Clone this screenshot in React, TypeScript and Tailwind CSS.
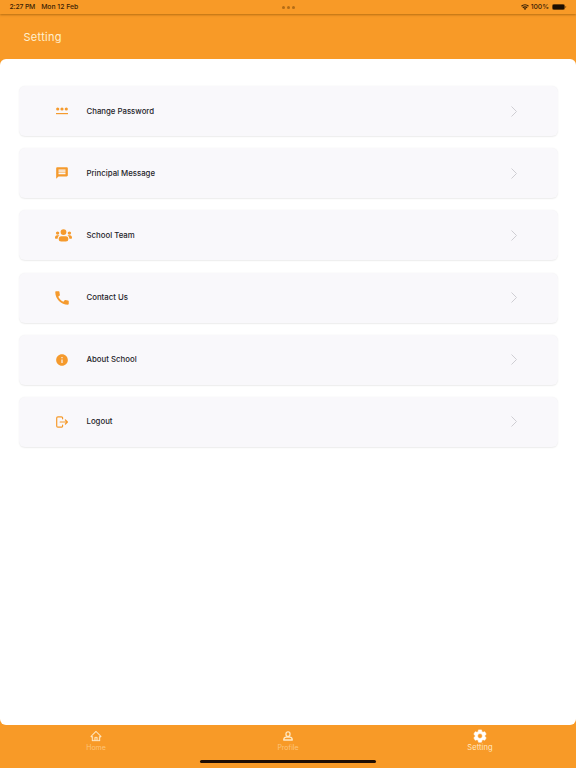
import React, { useState } from 'react';
import { MdMessage, MdCall, MdInfo } from 'react-icons/md';
import { AiOutlineHome } from 'react-icons/ai';

const PasswordIcon = () => (
  <svg viewBox="0 0 12 9" className="w-3 h-[9px] mt-px ml-[0.5px]" fill="currentColor">
    <circle cx="1.7" cy="2" r="1.6" />
    <circle cx="6" cy="2" r="1.6" />
    <circle cx="10.3" cy="2" r="1.6" />
    <rect y="6" width="12" height="1.2" />
  </svg>
);

const TeamIcon = () => (
  <svg viewBox="0 0 17 13" className="w-[17px] h-[13px]" fill="currentColor">
    <circle cx="8.5" cy="3.1" r="2.9" />
    <circle cx="2.6" cy="4.1" r="1.7" />
    <circle cx="14.4" cy="4.1" r="1.7" />
    <rect x="3.7" y="7.2" width="9.6" height="5.4" rx="2.5" />
    <path d="M4.5 6.5c-1.200.6-1.800 1.700-1.900 3.200H1C.4 9.700 0 9.300 0 8.700c0-1.500.8-2.400 2-2.400h1c.6 0 1.100.1 1.500.2ZM12.500 6.500c1.200.6 1.800 1.700 1.900 3.200H16c.6 0 1-.4 1-1 0-1.500-.8-2.400-2-2.400h-1c-.6 0-1.100.1-1.500.2Z" />
  </svg>
);

const LogoutIcon = () => (
  <svg viewBox="0 0 12 12" className="w-3 h-3 ml-[0.5px]" fill="none" stroke="currentColor" strokeWidth="1.2" strokeLinecap="round" strokeLinejoin="round">
    <path d="M6.600 2.800V2A1.200 1.200 0 0 0 5.400.8H1.900A1.200 1.200 0 0 0 .7 2v8a1.200 1.200 0 0 0 1.200 1.200h3.500A1.200 1.200 0 0 0 6.600 10v-.8" />
    <path d="M4.200 6h7.100M9.400 4 11.400 6l-2 2" />
  </svg>
);

const ProfileIcon = () => (
  <svg viewBox="0 0 10 10" className="w-[10px] h-[10px]" fill="none" stroke="currentColor" strokeWidth="1.3" strokeLinejoin="round">
    <rect x="3" y=".8" width="4" height="4.5" rx="1.9" />
    <path d="M3.300 6.200h3.400c1.500 0 2.500 1 2.600 2.800H.7c.1-1.800 1.100-2.800 2.600-2.800Z" />
  </svg>
);

const GearIcon = () => (
  <svg viewBox="0 0 24 24" className="w-[14px] h-[14px]" fill="currentColor" stroke="currentColor" strokeWidth="1" strokeLinejoin="round">
    <path
      fillRule="evenodd"
      d="M9.400 1.500h5.200l.7 3.200 1.800 1 3.100-1 2.400 4.300-2.300 2.100v1.800l2.300 2.100-2.400 4.300-3.100-1-1.800 1-.7 3.200H9.400l-.7-3.200-1.800-1-3.100 1L1.400 15l2.300-2.100v-1.800L1.400 9l2.400-4.300 3.100 1 1.800-1ZM12 7.800a4.200 4.200 0 1 0 0 8.400 4.200 4.200 0 0 0 0-8.400Z"
    />
  </svg>
);

const menuItems = [
  { label: 'Change Password', icon: <PasswordIcon /> },
  { label: 'Principal Message', icon: <MdMessage size={14} className="-ml-[0.5px]" /> },
  { label: 'School Team', icon: <TeamIcon /> },
  { label: 'Contact Us', icon: <MdCall size={18} className="-ml-[2px]" /> },
  { label: 'About School', icon: <MdInfo size={14} className="-ml-[0.5px]" /> },
  { label: 'Logout', icon: <LogoutIcon /> },
];

const tabs = [
  { label: 'Home', icon: <AiOutlineHome size={12} strokeWidth={24} /> },
  { label: 'Profile', icon: <ProfileIcon /> },
  { label: 'Setting', icon: <GearIcon /> },
];

const StatusBar = () => (
  <div className="h-[14px] shrink-0 pl-[9.5px] pr-[9px] grid grid-cols-3 items-center text-[6.8px] font-medium text-[#3b2206] shadow-[0_1px_2px_rgba(130,75,0,0.55)]">
    <div className="flex gap-[6px] whitespace-nowrap pt-px">
      <span className="tracking-[-0.15px]">2:27 PM</span>
      <span>Mon 12 Feb</span>
    </div>
    <div className="flex justify-center gap-[2px]">
      <span className="w-[3px] h-[3px] rounded-full bg-[#b36c16]" />
      <span className="w-[3px] h-[3px] rounded-full bg-[#b36c16]" />
      <span className="w-[3px] h-[3px] rounded-full bg-[#b36c16]" />
    </div>
    <div className="flex items-center justify-end gap-[2px]">
      <svg viewBox="0 0 16 12" className="w-2 h-[6px]" fill="none" stroke="currentColor" strokeWidth="2.6">
        <path d="M1 4.500a10 10 0 0 1 14 0M3.700 7.500a6 6 0 0 1 8.600 0" />
        <path d="m8 12-2.500-2.700a3.700 3.700 0 0 1 5 0Z" fill="currentColor" stroke="none" />
      </svg>
      <span>100%</span>
      <svg viewBox="0 0 15 6" className="w-[15px] h-[6px] ml-px">
        <rect x=".3" y=".3" width="12.4" height="5.4" rx="1.7" fill="#1c0e02" stroke="#8a5210" strokeWidth=".5" />
        <rect x="13.3" y="2" width=".8" height="2" rx=".4" fill="#8a5210" />
      </svg>
    </div>
  </div>
);

const App: React.FC = () => {
  const [activeTab, setActiveTab] = useState('Setting');

  return (
    <div className="h-screen flex flex-col bg-[#f89a27] overflow-hidden font-['Inter',sans-serif]">
      <StatusBar />
      <header className="h-[45px] shrink-0 pl-[23.5px] pt-[14.5px]">
        <h1 className="text-[11px] leading-[17px] tracking-[0.3px] text-[#fff0cf]">{activeTab}</h1>
      </header>

      <main className="h-[666px] shrink-0 bg-white rounded-[6px] pt-[27.3px] pl-[19px] pr-[18px] flex flex-col gap-[12.1px]">
        {menuItems.map((item) => (
          <button
            key={item.label}
            className="w-full h-[50px] shrink-0 flex items-center rounded-[6px] bg-[#f9f8fb] pl-[36px] pr-[41px] shadow-[0_0.5px_1.5px_rgba(0,0,0,0.08)]"
          >
            <span className="w-[31.5px] flex items-center text-[#f59a2d]">{item.icon}</span>
            <span className="text-[7.8px] leading-3 font-medium text-[#242329] -mt-px">{item.label}</span>
            <svg viewBox="0 0 6 11" className="w-[6px] h-[11px] ml-auto" fill="none" stroke="#cfced3" strokeWidth="1">
              <path d="m.5.500 5 5-5 5" />
            </svg>
          </button>
        ))}
      </main>

      {/* Bottom tabs */}
      <nav className="relative flex-1 grid grid-cols-3">
        {tabs.map((tab) => (
          <button
            key={tab.label}
            onClick={() => setActiveTab(tab.label)}
            className={`flex flex-col items-center pt-[3px] ${activeTab === tab.label ? 'text-white' : 'text-[#ffe9c4]'}`}
          >
            <span className="h-4 flex items-center">{tab.icon}</span>
            <span
              className={`leading-[8px] ${
                activeTab === tab.label ? 'text-[7.5px] tracking-[0.1px] text-[#ffe9c4]' : 'text-[7px] text-[#fdc57c]'
              }`}
            >
              {tab.label}
            </span>
          </button>
        ))}
        <div className="absolute bottom-[5px] left-[200px] w-[176px] h-[3px] rounded-full bg-[#1f0d02]" />
      </nav>
    </div>
  );
};

export default App;
